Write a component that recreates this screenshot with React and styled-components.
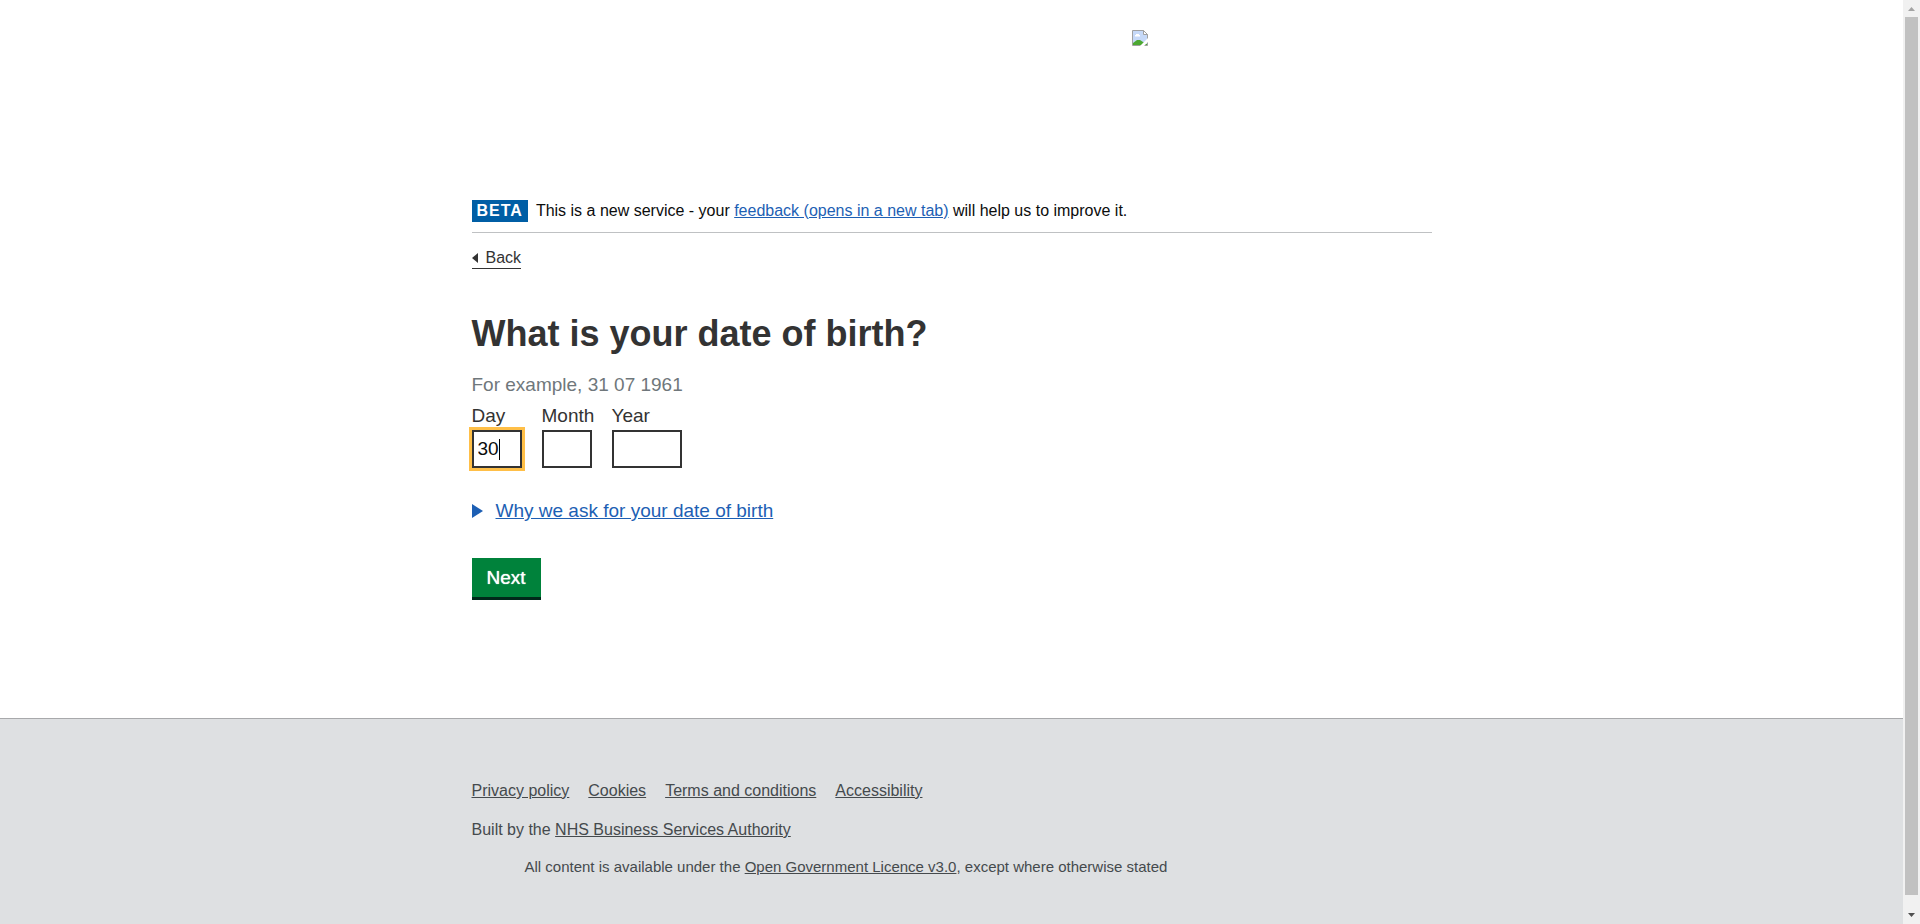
import React from "react";
import styled, { createGlobalStyle } from "styled-components";

const GlobalStyle = createGlobalStyle`
  *, *::before, *::after { box-sizing: border-box; }
  body {
    margin: 0;
    background: #fff;
    color: #333;
    font-family: Arial, "Liberation Sans", sans-serif;
    font-size: 19px;
    line-height: 24px;
  }
`;

const Shell = styled.div`
  display: flex;
  align-items: flex-start;
`;

const Page = styled.div`
  flex: 1;
  min-width: 0;
  min-height: 100vh;
  display: flex;
  flex-direction: column;
`;

const Container = styled.div`
  width: 100%;
  max-width: 960px;
  margin: 0 auto;
`;

const Header = styled.header`
  padding-top: 30px;
  height: 200px;
`;

const LogoLink = styled.a`
  display: block;
  width: 16px;
  margin-left: 660px;
  line-height: 0;
`;

const PhaseBanner = styled.div`
  display: flex;
  align-items: center;
  gap: 8px;
  padding-bottom: 10px;
  border-bottom: 1px solid #bfc1c3;
  color: #0b0c0c;
  font-size: 16px;
  line-height: 22px;
`;

const PhaseTag = styled.strong`
  padding: 0 5px;
  background: #005ea5;
  color: #fff;
  letter-spacing: 1px;
`;

const BlueLink = styled.a`
  color: #1d5fb4;
`;

const BackLink = styled.a`
  display: inline-flex;
  align-items: center;
  gap: 7px;
  margin-top: 14px;
  border-bottom: 1px solid #333;
  color: #333;
  font-size: 16px;
  line-height: 21px;
  text-decoration: none;
`;

const Main = styled.main`
  padding-bottom: 118px;
`;

const Form = styled.form`
  display: flex;
  flex-direction: column;
  align-items: flex-start;
`;

const DateGroup = styled.fieldset`
  margin: 44px 0 0;
  padding: 0;
  border: 0;
  min-width: 0;
`;

const Legend = styled.legend`
  padding: 0;
`;

const Title = styled.h1`
  margin: 0;
  font-size: 36px;
  line-height: 42px;
`;

const Hint = styled.p`
  margin: 18px 0 0;
  color: #6f777b;
`;

const Fields = styled.div`
  display: flex;
  gap: 20px;
  margin-top: 7px;
`;

const Field = styled.div`
  width: ${(p) => p.$width}px;
`;

const Label = styled.label`
  display: block;
  margin-bottom: 2px;
`;

const InputWrap = styled.div`
  position: relative;
  display: flex;
  outline: ${(p) => (p.$active ? "3px solid #ffbf47" : "none")};
`;

const DateInput = styled.input`
  width: 100%;
  height: 38px;
  padding: 4px;
  border: 2px solid #333;
  border-radius: 0;
  outline: none;
  background: #fff;
  color: #0b0c0c;
  caret-color: transparent;
  font: inherit;
`;

const Caret = styled.span`
  position: absolute;
  left: 27px;
  top: 9px;
  width: 1px;
  height: 21px;
  background: #000;
`;

const Details = styled.details`
  margin-top: 31px;
`;

const Summary = styled.summary`
  display: flex;
  align-items: center;
  gap: 13px;
  color: #1d5fb4;
  cursor: pointer;
  list-style: none;
`;

const SummaryText = styled.span`
  text-decoration: underline;
`;

const NextButton = styled.button`
  margin-top: 35px;
  padding: 8px 15px 7px;
  border: 0;
  border-bottom: 3px solid #00291a;
  border-radius: 0;
  background: #00823b;
  color: #fff;
  font-family: inherit;
  font-size: 19px;
  font-weight: 400;
  line-height: 24px;
  text-shadow: 0 0 1px #fff;
`;

const Footer = styled.footer`
  flex: 1;
  padding: 60px 0 46px;
  border-top: 1px solid #a8a9ab;
  background: #dee0e2;
  color: #454a4d;
  font-size: 16px;
`;

const FooterNav = styled.nav`
  display: flex;
  gap: 19px;
`;

const FooterLink = styled.a`
  color: #454a4d;
`;

const FooterText = styled.p`
  margin: 15px 0 0;
`;

const Licence = styled.p`
  margin: 13px 0 0;
  padding-left: 53px;
  font-size: 15px;
`;

const Scrollbar = styled.div`
  position: sticky;
  top: 0;
  flex: none;
  width: 17px;
  height: 100vh;
  padding: 0 2px;
  display: flex;
  flex-direction: column;
  background: #f1f1f1;
`;

const ScrollArrow = styled.svg`
  display: block;
  flex: none;
  width: 13px;
  height: 17px;
`;

const Thumb = styled.div`
  flex: 1;
  margin-bottom: 12px;
  background: #c1c1c1;
`;

const BrokenImage = () => (
  <svg width="16" height="16" viewBox="0 0 16 16" role="img" aria-label="Logo">
    <path d="M.5.5h11l4 4v11H.5z" fill="#c6d9f8" stroke="#a0a0a0" />
    <path d="M11.5.5v4h4z" fill="#fff" stroke="#a0a0a0" />
    <path d="M3 6.500V5h1V4h3v1h1v1.500z" fill="#fff" />
    <path d="M1 15v-2l4-3h3l3 2 4 2v1z" fill="#4ca832" />
    <path d="M8 16l8-8v4l-4 4z" fill="#fff" />
  </svg>
);

const fields = [
  { id: "day", label: "Day", width: 50, value: "30", active: true },
  { id: "month", label: "Month", width: 50, value: "" },
  { id: "year", label: "Year", width: 70, value: "" },
];

export default function App() {
  return (
    <>
      <GlobalStyle />
      <Shell>
        <Page>
          <Container>
            <Header>
              <LogoLink href="#home"><BrokenImage /></LogoLink>
            </Header>
            <PhaseBanner>
              <PhaseTag>BETA</PhaseTag>
              <span>
                This is a new service - your{" "}
                <BlueLink href="#feedback">feedback (opens in a new tab)</BlueLink>{" "}
                will help us to improve it.
              </span>
            </PhaseBanner>
            <BackLink href="#back">
              <svg width="7" height="10" viewBox="0 0 7 10" aria-hidden="true">
                <path d="M0 5l6-5v10z" fill="#333" />
              </svg>
              Back
            </BackLink>
            <Main>
              <Form onSubmit={(e) => e.preventDefault()}>
                <DateGroup>
                  <Legend><Title>What is your date of birth?</Title></Legend>
                  <Hint>For example, 31 07 1961</Hint>
                  <Fields>
                    {fields.map((f) => (
                      <Field key={f.id} $width={f.width}>
                        <Label htmlFor={f.id}>{f.label}</Label>
                        <InputWrap $active={f.active}>
                          <DateInput id={f.id} name={f.id} inputMode="numeric" defaultValue={f.value} />
                          {f.active && <Caret />}
                        </InputWrap>
                      </Field>
                    ))}
                  </Fields>
                </DateGroup>
                <Details>
                  <Summary>
                    <svg width="11" height="14" viewBox="0 0 11 14" aria-hidden="true">
                      <path d="M0 0l11 7-11 7z" fill="#1d5fb4" />
                    </svg>
                    <SummaryText>Why we ask for your date of birth</SummaryText>
                  </Summary>
                </Details>
                <NextButton type="submit">Next</NextButton>
              </Form>
            </Main>
          </Container>
          <Footer>
            <Container>
              <FooterNav>
                <FooterLink href="#privacy">Privacy policy</FooterLink>
                <FooterLink href="#cookies">Cookies</FooterLink>
                <FooterLink href="#terms">Terms and conditions</FooterLink>
                <FooterLink href="#accessibility">Accessibility</FooterLink>
              </FooterNav>
              <FooterText>
                Built by the <FooterLink href="#nhsbsa">NHS Business Services Authority</FooterLink>
              </FooterText>
              <Licence>
                All content is available under the{" "}
                <FooterLink href="#licence">Open Government Licence v3.0</FooterLink>, except where
                otherwise stated
              </Licence>
            </Container>
          </Footer>
        </Page>
        <Scrollbar aria-hidden="true">
          <ScrollArrow viewBox="0 0 13 17">
            <path d="M3 11h7l-3.500-4z" fill="#a3a3a3" />
          </ScrollArrow>
          <Thumb />
          <ScrollArrow viewBox="0 0 13 17">
            <path d="M3 6h7l-3.500 4z" fill="#505050" />
          </ScrollArrow>
        </Scrollbar>
      </Shell>
    </>
  );
}
